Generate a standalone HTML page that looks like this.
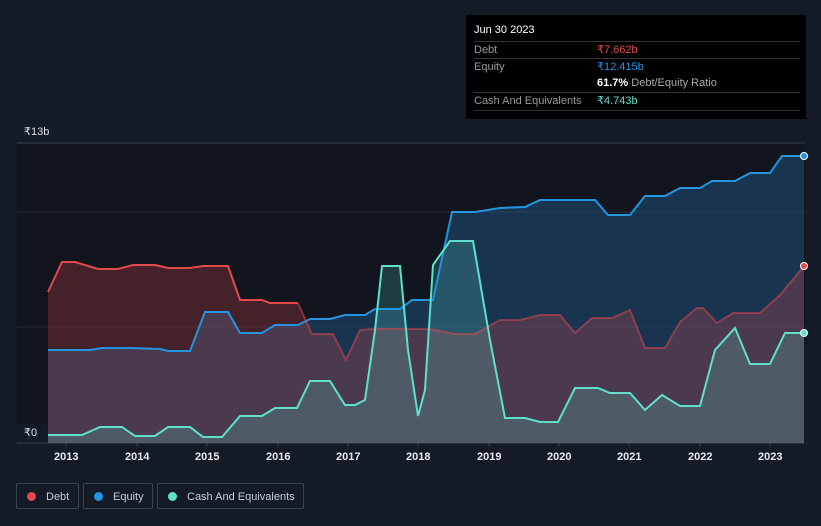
<!DOCTYPE html>
<html><head><meta charset="utf-8"><style>
body{margin:0;width:821px;height:526px;background:#151b26;font-family:"Liberation Sans",sans-serif;overflow:hidden;position:relative}
.tip{position:absolute;left:466px;top:15px;width:340px;height:104px;background:#000;color:#fff;font-size:11px}
.tip .r{position:absolute;left:8px;right:6px;border-top:1px solid #333;height:17px;line-height:17px;color:#999}
.leg{position:absolute;top:483px;height:26px;border:1px solid #3a4150;border-radius:2px;color:#c8ccd2;font-size:11px;line-height:26px;box-sizing:border-box}
.leg i{display:inline-block;width:9px;height:9px;border-radius:50%;margin:0 10px 0 10px;vertical-align:-1px}
.yr{position:absolute;top:451px;color:#e6e8ea;font-size:11px;font-weight:bold}
</style></head><body>
<svg width="821" height="526" style="position:absolute;left:0;top:0">
<rect x="17" y="143" width="788" height="300" fill="#10151e"/>
<line x1="17" y1="143" x2="805" y2="143" stroke="#3a404b"/>
<line x1="17" y1="212" x2="805" y2="212" stroke="#262c36"/>
<line x1="17" y1="327" x2="805" y2="327" stroke="#262c36"/>
<line x1="17" y1="443" x2="805" y2="443" stroke="#3a404b"/>
<polygon fill="#1f4f78" fill-opacity="0.55" points="48,443 48,350 90,350 102,348 130,348 160,349 168,351 190,351 205,312 228,312 240,333 262,333 275,325 298,325 310,319 330,319 345,315 365,315 375,309 400,309 412,300 433,300 452,212 475,212 500,208 525,207 540,200 595,200 608,215 630,215 645,196 665,196 680,188 700,188 712,181 735,181 750,173 770,173 782,156 804,156 804,443"/>
<polygon fill="#e5484d" fill-opacity="0.25" points="48,443 48,292 62,262 75,262 98,269 118,269 133,265 155,265 168,268 190,268 203,266 228,266 240,300 262,300 270,303 298,303 312,334 333,334 346,360 360,330 375,329 430,329 455,334 475,334 500,320 520,320 540,315 560,315 575,333 592,318 612,318 630,310 645,348 665,348 680,322 697,308 703,308 717,323 733,313 760,313 780,295 804,266 804,443"/>
<polygon fill="#5ee0cc" fill-opacity="0.2" points="48,443 48,435 82,435 100,427 122,427 135,436 155,436 168,427 190,427 203,437 222,437 240,416 262,416 275,408 297,408 310,381 330,381 345,405 355,405 365,400 375,330 382,266 400,266 408,350 418,416 425,390 433,265 450,241 473,241 490,340 505,418 525,418 540,422 558,422 575,388 598,388 610,393 630,393 645,410 662,395 680,406 700,406 715,350 735,328 750,364 770,364 785,333 804,333 804,443"/>
<polyline fill="none" stroke="#2394df" stroke-width="2" points="48,350 90,350 102,348 130,348 160,349 168,351 190,351 205,312 228,312 240,333 262,333 275,325 298,325 310,319 330,319 345,315 365,315 375,309 400,309 412,300 433,300 452,212 475,212 500,208 525,207 540,200 595,200 608,215 630,215 645,196 665,196 680,188 700,188 712,181 735,181 750,173 770,173 782,156 804,156"/>
<polyline fill="none" stroke="#e5484d" stroke-width="2" points="48,292 62,262 75,262 98,269 118,269 133,265 155,265 168,268 190,268 203,266 228,266 240,300 262,300 270,303 298,303"/>
<polyline fill="none" stroke="#e5484d" stroke-opacity="0.5" stroke-width="2" points="298,303 312,334 333,334 346,360 360,330 375,329 430,329 455,334 475,334 500,320 520,320 540,315 560,315 575,333 592,318 612,318 630,310 645,348 665,348 680,322 697,308 703,308 717,323 733,313 760,313 780,295 804,266"/>
<polyline fill="none" stroke="#5ee0cc" stroke-width="2" points="48,435 82,435 100,427 122,427 135,436 155,436 168,427 190,427 203,437 222,437 240,416 262,416 275,408 297,408 310,381 330,381 345,405 355,405 365,400 375,330 382,266 400,266 408,350 418,416 425,390 433,265 450,241 473,241 490,340 505,418 525,418 540,422 558,422 575,388 598,388 610,393 630,393 645,410 662,395 680,406 700,406 715,350 735,328 750,364 770,364 785,333 804,333"/>
<circle cx="804" cy="156" r="3.5" fill="#2394df" stroke="#fff" stroke-width="1"/>
<circle cx="804" cy="266" r="3.5" fill="#e5484d" stroke="#fff" stroke-width="1"/>
<circle cx="804" cy="333" r="3.5" fill="#5ee0cc" stroke="#fff" stroke-width="1"/>
<g stroke="#3a404b"><line x1="66" y1="443" x2="66" y2="447"/><line x1="137" y1="443" x2="137" y2="447"/><line x1="207" y1="443" x2="207" y2="447"/><line x1="278" y1="443" x2="278" y2="447"/><line x1="348" y1="443" x2="348" y2="447"/><line x1="418" y1="443" x2="418" y2="447"/><line x1="489" y1="443" x2="489" y2="447"/><line x1="559" y1="443" x2="559" y2="447"/><line x1="629" y1="443" x2="629" y2="447"/><line x1="700" y1="443" x2="700" y2="447"/><line x1="770" y1="443" x2="770" y2="447"/></g>
</svg>
<div style="position:absolute;left:24px;top:125px;color:#ddd;font-size:11px">₹13b</div>
<div style="position:absolute;left:17px;top:424px;width:30px;height:18px;background:#151b26;color:#ddd;font-size:11px;line-height:18px;padding-left:7px;box-sizing:border-box">₹0</div>
<div class="yr" style="left:54px">2013</div><div class="yr" style="left:125px">2014</div><div class="yr" style="left:195px">2015</div><div class="yr" style="left:266px">2016</div><div class="yr" style="left:336px">2017</div><div class="yr" style="left:406px">2018</div><div class="yr" style="left:477px">2019</div><div class="yr" style="left:547px">2020</div><div class="yr" style="left:617px">2021</div><div class="yr" style="left:688px">2022</div><div class="yr" style="left:758px">2023</div>
<div class="tip">
<div style="position:absolute;left:8px;top:9px">Jun 30 2023</div>
<div class="r" style="top:26px">Debt<span style="position:absolute;left:123px;color:#e5484d">₹7.662b</span></div>
<div class="r" style="top:43px;border-top-color:#333">Equity<span style="position:absolute;left:123px;color:#2394df">₹12.415b</span></div>
<div class="r" style="top:60px;border:none"><span style="position:absolute;left:123px;color:#fff;white-space:nowrap"><b>61.7%</b> <span style="color:#aaa">Debt/Equity Ratio</span></span></div>
<div class="r" style="top:77px">Cash And Equivalents<span style="position:absolute;left:123px;color:#5ee0cc">₹4.743b</span></div>
<div class="r" style="top:95px;height:0"></div>
</div>
<div class="leg" style="left:16px;width:63px"><i style="background:#e5484d"></i>Debt</div>
<div class="leg" style="left:83px;width:70px"><i style="background:#2394df"></i>Equity</div>
<div class="leg" style="left:157px;width:147px"><i style="background:#5ee0cc"></i>Cash And Equivalents</div>
</body></html>
